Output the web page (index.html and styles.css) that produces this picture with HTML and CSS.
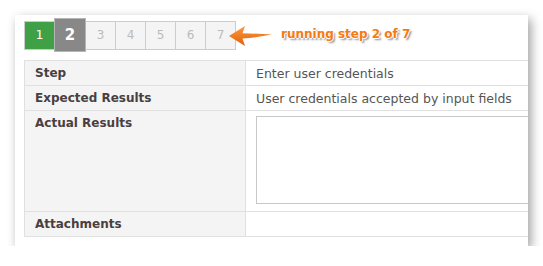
FILE: index.html
```html
<!DOCTYPE html>
<html lang="en">
<head>
    <meta charset="UTF-8">
    <title>Test Run</title>
    <link rel="stylesheet" href="styles.css">
</head>
<body>
    <div class="run-panel">
        <div class="run-header">
            <div class="step-list">
                <span class="step done">1</span>
                <span class="step current">2</span>
                <span class="step">3</span>
                <span class="step">4</span>
                <span class="step">5</span>
                <span class="step">6</span>
                <span class="step">7</span>
            </div>
            <svg class="step-arrow" width="45" height="22" viewBox="0 0 45 22">
                <defs>
                    <linearGradient id="arrowFill" x1="0" y1="0" x2="0" y2="1">
                        <stop offset="0" stop-color="#fb9a3c"/>
                        <stop offset="1" stop-color="#e2600a"/>
                    </linearGradient>
                </defs>
                <path d="M1 11 L17 1 L14.5 8.2 Q30 8.6 44 9.6 Q30 12.4 14.5 13.6 L17 21 Z" fill="url(#arrowFill)"/>
            </svg>
            <span class="run-note">running step 2 of 7</span>
        </div>

        <table class="step-table">
            <colgroup>
                <col class="label-col">
                <col>
            </colgroup>
            <tr>
                <th>Step</th>
                <td>Enter user credentials</td>
            </tr>
            <tr>
                <th>Expected Results</th>
                <td>User credentials accepted by input fields</td>
            </tr>
            <tr class="actual-row">
                <th>Actual Results</th>
                <td><textarea class="actual-input"></textarea></td>
            </tr>
            <tr>
                <th>Attachments</th>
                <td></td>
            </tr>
        </table>
    </div>
</body>
</html>
```

FILE: styles.css
```css
body {
    margin: 0;
    background-color: #fff;
    font-family: "DejaVu Sans", Verdana, sans-serif;
}
.run-panel {
    width: 504px;
    height: 231px;
    margin: 15px 0 0 15px;
    padding-left: 9px;
    background-color: #fff;
    box-shadow: 3px 4px 10px rgba(0, 0, 0, 0.38);
    overflow: hidden;
}
.run-header {
    display: flex;
    align-items: flex-start;
    height: 42px;
    padding-top: 3px;
}
.step-list {
    display: flex;
    align-items: center;
    height: 34px;
}
.step {
    width: 29px;
    height: 27px;
    margin-right: -1px;
    border: 1px solid #ccc;
    background-color: #f4f4f4;
    color: #bbb;
    font-size: 12px;
    line-height: 27px;
    text-align: center;
}
.step.done {
    background-color: #40a046;
    color: #fff;
}
.step.current {
    position: relative;
    width: 30px;
    height: 32px;
    border-color: #b5b5b5;
    background-color: #888;
    color: #fff;
    font-size: 15px;
    font-weight: bold;
    line-height: 32px;
}
.step-arrow {
    margin-top: 7px;
    margin-left: -7px;
}
.run-note {
    margin-top: 9px;
    margin-left: 8px;
    color: #f57a12;
    font-size: 12px;
    font-weight: bold;
    text-shadow: 1px 0 0 #fff, -1px 0 0 #fff, 0 1px 0 #fff, 0 -1px 0 #fff,
        2px 2px 2px rgba(0, 0, 0, 0.45);
}
.step-table {
    width: 620px;
    table-layout: fixed;
    border-collapse: collapse;
}
.label-col {
    width: 221px;
}
.step-table th,
.step-table td {
    height: 24px;
    padding: 0 10px;
    border: 1px solid #e0e0e0;
    text-align: left;
    vertical-align: middle;
}
.step-table th {
    padding-left: 10px;
    background-color: #f4f4f4;
    color: #4a3f40;
    font-size: 12px;
}
.step-table td {
    color: #555;
    font-size: 12.5px;
}
.actual-row th {
    vertical-align: top;
    padding-top: 5px;
}
.actual-row td {
    height: 88px;
    padding: 5px 10px 7px;
}
.actual-input {
    display: block;
    width: 400px;
    height: 88px;
    box-sizing: border-box;
    margin: 0;
    border: 1px solid #c8c8c8;
    resize: none;
}
```
